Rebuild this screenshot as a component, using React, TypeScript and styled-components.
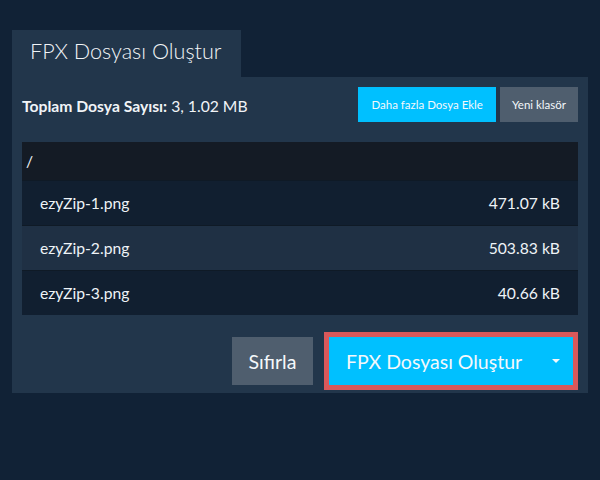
import React from 'react';
import styled, { createGlobalStyle } from 'styled-components';

const GlobalStyle = createGlobalStyle`
  html, body {
    margin: 0;
    padding: 0;
    background: #112236;
    font-family: Lato, "Open Sans", sans-serif;
    color: #eef3f7;
  }
`;

const files = [
  { name: 'ezyZip-1.png', size: '471.07 kB' },
  { name: 'ezyZip-2.png', size: '503.83 kB' },
  { name: 'ezyZip-3.png', size: '40.66 kB' },
];

export default function App() {
  return (
    <>
      <GlobalStyle />
      <Page>
        <Tab>FPX Dosyası Oluştur</Tab>
        <Panel>
          <TopBar>
            <Total>
              <strong>Toplam Dosya Sayısı:</strong> 3, 1.02 MB
            </Total>
            <SmallButton $variant="primary">Daha fazla Dosya Ekle</SmallButton>
            <SmallButton>Yeni klasör</SmallButton>
          </TopBar>
          <FileList>
            <PathRow>/</PathRow>
            {files.map((f, i) => (
              <FileRow key={f.name} $alt={i % 2 === 1}>
                <span>{f.name}</span>
                <span>{f.size}</span>
              </FileRow>
            ))}
          </FileList>
          <Actions>
            <ResetButton>Sıfırla</ResetButton>
            <CreateButton>
              FPX Dosyası Oluştur
              <Caret />
            </CreateButton>
          </Actions>
        </Panel>
      </Page>
    </>
  );
}

const Page = styled.div`
  padding: 30px 12px 0;
`;

const Tab = styled.div`
  display: inline-block;
  background: #22364b;
  height: 47px;
  line-height: 42px;
  padding: 0 19px 0 18px;
  font-size: 21.6px;
  font-weight: 300;
  color: #f1f4f7;
`;

const Panel = styled.div`
  background: #22364b;
  padding: 10px 10px 8px;
`;

const TopBar = styled.div`
  display: flex;
  align-items: center;
  gap: 4px;
  height: 35px;
`;

const Total = styled.div`
  flex: 1;
  font-size: 15.7px;
  padding-top: 3px;
  color: #f1f4f7;
  strong {
    font-weight: 700;
  }
`;

const SmallButton = styled.button<{ $variant?: 'primary' }>`
  height: 35px;
  border: none;
  padding: 0 ${(p) => (p.$variant === 'primary' ? 13 : 12)}px;
  font-family: inherit;
  font-size: 11.5px;
  color: #f4f8fb;
  background: ${(p) => (p.$variant === 'primary' ? '#00c0ff' : '#4f5e6e')};
`;

const FileList = styled.div`
  margin-top: 20px;
`;

const PathRow = styled.div`
  background: #141b25;
  height: 38px;
  line-height: 38px;
  padding: 0 4px;
  font-size: 15.7px;
`;

const FileRow = styled.div<{ $alt?: boolean }>`
  display: flex;
  justify-content: space-between;
  align-items: center;
  height: 44px;
  padding: 0 18px;
  font-size: 15.7px;
  background: ${(p) => (p.$alt ? '#1f3044' : '#111f30')};
  border-top: 1px solid #0f1a26;
`;

const Actions = styled.div`
  display: flex;
  justify-content: flex-end;
  align-items: center;
  gap: 16px;
  margin-top: 22px;
  padding-right: 5px;
`;

const ResetButton = styled.button`
  height: 48px;
  width: 81px;
  border: none;
  background: #4f5e6e;
  color: #f4f8fb;
  font-family: inherit;
  font-size: 19.6px;
`;

const CreateButton = styled.button`
  display: flex;
  align-items: center;
  justify-content: space-between;
  height: 48px;
  width: 244px;
  padding: 0 13px 0 17px;
  border: none;
  outline: 5px solid #d9585a;
  background: #00c0ff;
  color: #f4f8fb;
  font-family: inherit;
  font-size: 19.5px;
`;

const Caret = styled.span`
  width: 0;
  height: 0;
  border-left: 4px solid transparent;
  border-right: 4px solid transparent;
  border-top: 4px solid #f4f8fb;
`;
